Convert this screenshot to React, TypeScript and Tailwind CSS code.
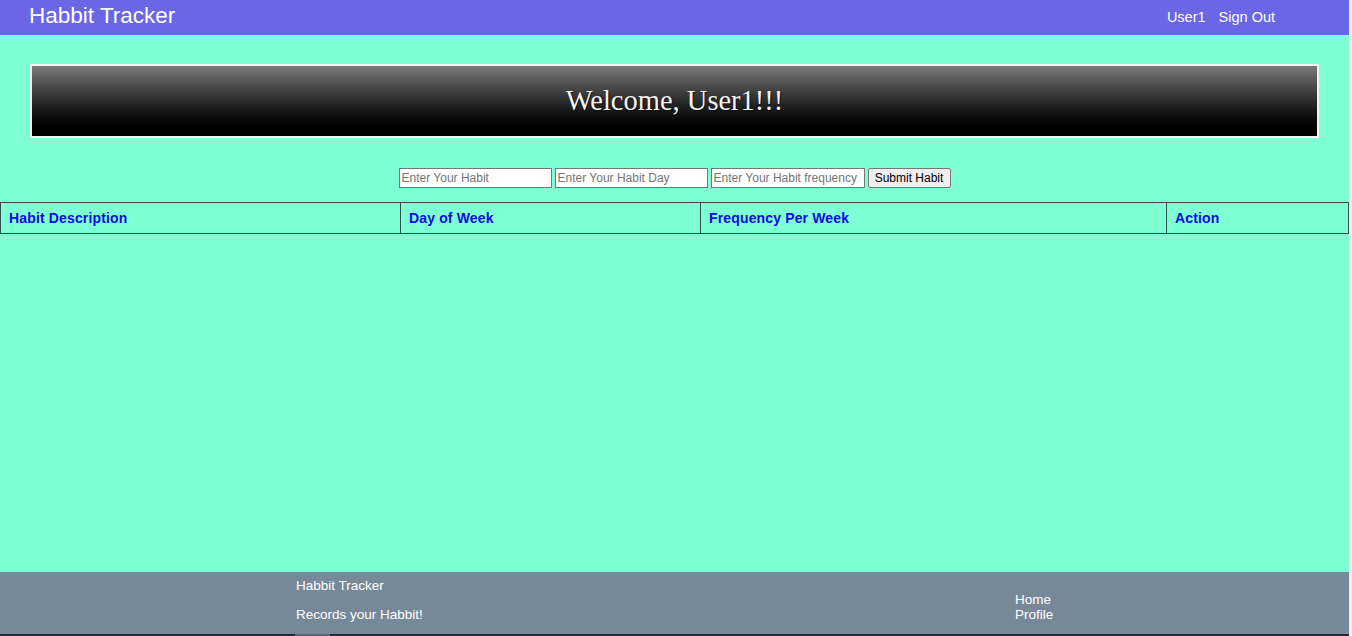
import React from "react";

const columns = [
  { label: "Habit Description", width: "w-[400px]" },
  { label: "Day of Week", width: "w-[300px]" },
  { label: "Frequency Per Week", width: "w-[466px]" },
  { label: "Action", width: "flex-1" },
];

const App: React.FC = () => {
  return (
    <div className="flex w-[1352px] font-['Liberation_Sans',Arial,sans-serif]">
      <div className="w-[1349px] flex flex-col">
        {/* Navbar */}
        <nav className="h-[35px] bg-[#6a66e6] flex items-center justify-between pl-[29px] pr-[74px] text-white">
          <span className="text-[22.5px] leading-none -mt-[3px]">Habbit Tracker</span>
          <div className="flex gap-[13px] text-[14.5px] leading-none">
            <span>User1</span>
            <span>Sign Out</span>
          </div>
        </nav>

        {/* Main content */}
        <main className="h-[537px] bg-[#7fffd4] flex flex-col">
          <div className="mx-[30px] mt-[29px] h-[74px] border-2 border-[#f4f4f4] bg-gradient-to-b from-[#7a7a7a] to-[#000000] flex items-center justify-center">
            <h1 className="font-['Liberation_Serif','Times_New_Roman',serif] text-[28.5px] text-[#f2f2f2] [text-shadow:1px_1px_1px_rgba(0,0,0,0.6)]">
              Welcome, User1!!!
            </h1>
          </div>

          <form className="mt-[30px] flex justify-center gap-[3px] text-[12px]">
            <input
              type="text"
              placeholder="Enter Your Habit"
              className="w-[153px] h-[20px] px-[2px] bg-white border border-[#767676] placeholder:text-[#757575]"
            />
            <input
              type="text"
              placeholder="Enter Your Habit Day"
              className="w-[153px] h-[20px] px-[2px] bg-white border border-[#767676] placeholder:text-[#757575]"
            />
            <input
              type="text"
              placeholder="Enter Your Habit frequency"
              className="w-[154px] h-[20px] px-[2px] bg-white border border-[#767676] placeholder:text-[#757575]"
            />
            <button
              type="button"
              className="w-[83px] h-[20px] bg-[#efefef] border border-[#767676] rounded-[2px] text-black"
            >
              Submit Habit
            </button>
          </form>

          <div className="mt-[14px] flex h-[32px] border border-[#2f4f4f]">
            {columns.map((col, i) => (
              <div
                key={col.label}
                className={`${col.width} flex items-center pl-[8px] text-[14px] font-bold tracking-[0.15px] text-[#0a0ae6] ${
                  i < columns.length - 1 ? "border-r border-[#2f4f4f]" : ""
                }`}
              >
                {col.label}
              </div>
            ))}
          </div>
        </main>

        {/* Footer */}
        <footer className="h-[62px] bg-[#778899] flex text-white text-[13.5px]">
          <div className="ml-[296px] w-[719px] pt-[6px]">
            <p className="leading-[16px]">Habbit Tracker</p>
            <p className="leading-[16px] mt-[13px]">Records your Habbit!</p>
          </div>
          <div className="pt-[20px] leading-[15px]">
            <p>Home</p>
            <p>Profile</p>
          </div>
        </footer>
        <div className="h-[2px] bg-[#1f2a36] flex">
          <div className="ml-[295px] w-[35px] bg-[#5a6472]" />
        </div>
      </div>
      <div className="w-[3px] bg-[#eeeeee]" />
    </div>
  );
};

export default App;
